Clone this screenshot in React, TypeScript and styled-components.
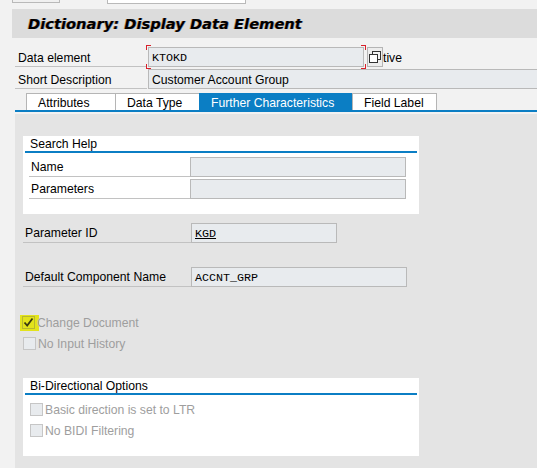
import React from "react";
import styled, { createGlobalStyle } from "styled-components";

const Global = createGlobalStyle`
  html, body { margin: 0; padding: 0; background: #f2f2f2; }
  body {
    font-family: "Liberation Sans", Arial, sans-serif;
    font-size: 12.2px;
    color: #000;
    width: 537px;
    height: 468px;
    overflow: hidden;
  }
  * { box-sizing: border-box; }
`;

const Page = styled.div`
  display: flex;
  flex-direction: column;
  height: 468px;
  overflow: hidden;
`;

const Toolbar = styled.div`
  height: 9px;
  display: flex;
  align-items: flex-start;
  padding-left: 12px;
  gap: 47px;
`;

const ToolStub = styled.div<{ $w: number; $h: number; $white?: boolean }>`
  width: ${(p) => p.$w}px;
  height: ${(p) => p.$h}px;
  border: 1px solid #b9b9b9;
  border-top: none;
  background: ${(p) => (p.$white ? "#ffffff" : "#f0f0f0")};
`;

const TitleBar = styled.div`
  margin-left: 12px;
  height: 29px;
  background: #dcdcdc;
  padding-left: 16px;
  display: flex;
  align-items: center;
`;

const Title = styled.h1`
  margin: 0;
  font-family: "DejaVu Sans", Verdana, sans-serif;
  font-weight: bold;
  font-style: italic;
  font-size: 14.7px;
  color: #000;
  text-shadow: -0.7px 0 0 rgba(190, 100, 0, 0.55), 0.7px 0 0 rgba(0, 70, 170, 0.45);
`;

const Header = styled.div`
  padding-left: 15px;
  display: flex;
  flex-direction: column;
`;

const HeaderRow = styled.div<{ $top: number }>`
  display: flex;
  align-items: flex-end;
  margin-top: ${(p) => p.$top}px;
`;

const HeaderLabel = styled.div<{ $h: number }>`
  width: 132px;
  height: ${(p) => p.$h}px;
  border-bottom: 1px solid #c2c2c2;
  padding: 0 0 1px 3px;
  display: flex;
  align-items: flex-end;
  flex-shrink: 0;
`;

const red = "#d8202a";

const Bracketed = styled.div`
  position: relative;
  margin-left: 1px;
  &::before {
    content: "";
    position: absolute;
    inset: -2px;
    pointer-events: none;
    background:
      linear-gradient(${red}, ${red}) left top / 5px 1px no-repeat,
      linear-gradient(${red}, ${red}) left top / 1px 5px no-repeat,
      linear-gradient(${red}, ${red}) left bottom / 5px 1px no-repeat,
      linear-gradient(${red}, ${red}) left bottom / 1px 5px no-repeat,
      linear-gradient(${red}, ${red}) right top / 5px 1px no-repeat,
      linear-gradient(${red}, ${red}) right top / 1px 5px no-repeat,
      linear-gradient(${red}, ${red}) right bottom / 5px 1px no-repeat,
      linear-gradient(${red}, ${red}) right bottom / 1px 5px no-repeat;
  }
`;

const Field = styled.div<{ $w?: number; $mono?: boolean; $grow?: boolean }>`
  width: ${(p) => (p.$w ? `${p.$w}px` : "auto")};
  flex: ${(p) => (p.$grow ? "1" : "none")};
  height: 20px;
  background: #e8ebee;
  border: 1px solid #b9b9b9;
  padding: 1px 0 0 3px;
  display: flex;
  align-items: center;
  font-family: ${(p) =>
    p.$mono ? '"Liberation Mono", "Courier New", monospace' : '"Liberation Sans", Arial, sans-serif'};
  font-size: ${(p) => (p.$mono ? "11.7px" : "12.2px")};
  white-space: nowrap;
  overflow: hidden;
`;

const WideField = styled(Field)`
  border-right: none;
  margin-left: 1px;
`;

const IconButton = styled.div`
  width: 16px;
  height: 20px;
  margin-left: 3px;
  border: 1px solid #b5b5b5;
  background: #ededed;
  display: flex;
  align-items: center;
  justify-content: center;
`;

const TrailText = styled.span`
  padding-bottom: 2px;
`;

const TabStrip = styled.div`
  margin: 4px 0 0 15px;
  padding-left: 11px;
  display: flex;
  align-items: flex-end;
  border-bottom: 2px solid #0b7ec4;
  height: 19px;
`;

const Tab = styled.div<{ $w: number; $active?: boolean }>`
  width: ${(p) => p.$w}px;
  height: ${(p) => (p.$active ? 19 : 17)}px;
  margin-bottom: ${(p) => (p.$active ? -2 : 0)}px;
  padding: ${(p) => (p.$active ? "0" : "2px")} 0 0 11px;
  display: flex;
  align-items: center;
  background: ${(p) => (p.$active ? "#0b7ec4" : "#ffffff")};
  color: ${(p) => (p.$active ? "#ffffff" : "#000000")};
  border-top: 1px solid ${(p) => (p.$active ? "#0b7ec4" : "#b5b5b5")};
  border-left: 1px solid ${(p) => (p.$active ? "#0b7ec4" : "#b5b5b5")};
  &:last-child { border-right: 1px solid #b5b5b5; }
  white-space: nowrap;
`;

const Panel = styled.div`
  margin: 2px 0 0 15px;
  flex: 1;
  background: #e4e4e4;
  padding: 22px 0 0 8px;
  display: flex;
  flex-direction: column;
  align-items: flex-start;
`;

const Group = styled.div<{ $bottom: number; $top?: number }>`
  width: 396px;
  background: #ffffff;
  margin-top: ${(p) => p.$top ?? 0}px;
  padding: 0 2px ${(p) => p.$bottom}px 2px;
`;

const GroupTitle = styled.div`
  height: 17px;
  padding: 1px 0 1px 5px;
  border-bottom: 2px solid #0b7ec4;
  display: flex;
  align-items: center;
`;

const GroupBody = styled.div<{ $pad: number; $gap: number; $top: number }>`
  padding: ${(p) => p.$top}px 0 0 ${(p) => p.$pad}px;
  display: flex;
  flex-direction: column;
  gap: ${(p) => p.$gap}px;
`;

const FormRow = styled.div<{ $top?: number }>`
  display: flex;
  align-items: flex-end;
  margin-top: ${(p) => p.$top ?? 0}px;
`;

const FormLabel = styled.div<{ $w: number; $pad?: number }>`
  width: ${(p) => p.$w}px;
  height: 20px;
  border-bottom: 1px solid #c2c2c2;
  padding: 1px 0 0 ${(p) => p.$pad ?? 2}px;
  display: flex;
  align-items: center;
  flex-shrink: 0;
`;

const Underlined = styled.span`
  text-decoration: underline;
`;

const CheckRow = styled.div<{ $top?: number; $left?: number }>`
  display: flex;
  align-items: center;
  height: 21px;
  margin-top: ${(p) => p.$top ?? 0}px;
  padding-left: ${(p) => p.$left ?? 0}px;
  color: #9e9e9e;
`;

const Highlight = styled.span`
  display: inline-flex;
  align-items: center;
  justify-content: center;
  width: 19px;
  height: 16px;
  margin-left: -3px;
  margin-right: -2px;
  background: #e3e31c;
`;

const Box = styled.span<{ $yellow?: boolean }>`
  width: 13px;
  height: 13px;
  border: 1px solid ${(p) => (p.$yellow ? "#b8b830" : "#c6c6c6")};
  background: ${(p) => (p.$yellow ? "transparent" : "#e8ebee")};
  display: inline-flex;
  align-items: center;
  justify-content: center;
  margin-right: 2px;
`;

const CopyIcon = () => (
  <svg width="14" height="14" viewBox="0 0 14 14">
    <rect x="4.5" y="1.5" width="8" height="8" fill="#f4f4f4" stroke="#333" strokeWidth="1" />
    <rect x="1.5" y="4.5" width="8" height="8" fill="#ffffff" stroke="#333" strokeWidth="1" />
  </svg>
);

const CheckMark = () => (
  <svg width="11" height="11" viewBox="0 0 11 11">
    <path d="M1.5 5.5 L4.2 8.5 L9.5 1.5" fill="none" stroke="#3a3a10" strokeWidth="1.8" />
  </svg>
);

export default function App() {
  return (
    <>
      <Global />
      <Page>
        <Toolbar>
          <ToolStub $w={48} $h={3} />
          <ToolStub $w={139} $h={4} $white />
        </Toolbar>
        <TitleBar>
          <Title>Dictionary: Display Data Element</Title>
        </TitleBar>
        <Header>
          <HeaderRow $top={9}>
            <HeaderLabel $h={20}>Data element</HeaderLabel>
            <Bracketed>
              <Field $w={216} $mono>KTOKD</Field>
            </Bracketed>
            <IconButton>
              <CopyIcon />
            </IconButton>
            <TrailText>tive</TrailText>
          </HeaderRow>
          <HeaderRow $top={0}>
            <HeaderLabel $h={22}>Short Description</HeaderLabel>
            <WideField $grow>Customer Account Group</WideField>
          </HeaderRow>
        </Header>
        <TabStrip>
          <Tab $w={89}>Attributes</Tab>
          <Tab $w={84}>Data Type</Tab>
          <Tab $w={153} $active>Further Characteristics</Tab>
          <Tab $w={85}>Field Label</Tab>
        </TabStrip>
        <Panel>
          <Group $bottom={15}>
            <GroupTitle>Search Help</GroupTitle>
            <GroupBody $pad={4} $gap={2} $top={4}>
              <FormRow>
                <FormLabel $w={161}>Name</FormLabel>
                <Field $w={216} />
              </FormRow>
              <FormRow>
                <FormLabel $w={161}>Parameters</FormLabel>
                <Field $w={216} />
              </FormRow>
            </GroupBody>
          </Group>
          <FormRow $top={9}>
            <FormLabel $w={168}>Parameter ID</FormLabel>
            <Field $w={146} $mono>
              <Underlined>KGD</Underlined>
            </Field>
          </FormRow>
          <FormRow $top={24}>
            <FormLabel $w={168}>Default Component Name</FormLabel>
            <Field $w={216} $mono>ACCNT_GRP</Field>
          </FormRow>
          <CheckRow $top={25}>
            <Highlight>
              <Box $yellow>
                <CheckMark />
              </Box>
            </Highlight>
            Change Document
          </CheckRow>
          <CheckRow>
            <Box />
            No Input History
          </CheckRow>
          <Group $bottom={15} $top={24}>
            <GroupTitle>Bi-Directional Options</GroupTitle>
            <GroupBody $pad={5} $gap={0} $top={4}>
              <CheckRow>
                <Box />
                Basic direction is set to LTR
              </CheckRow>
              <CheckRow>
                <Box />
                No BIDI Filtering
              </CheckRow>
            </GroupBody>
          </Group>
        </Panel>
      </Page>
    </>
  );
}
